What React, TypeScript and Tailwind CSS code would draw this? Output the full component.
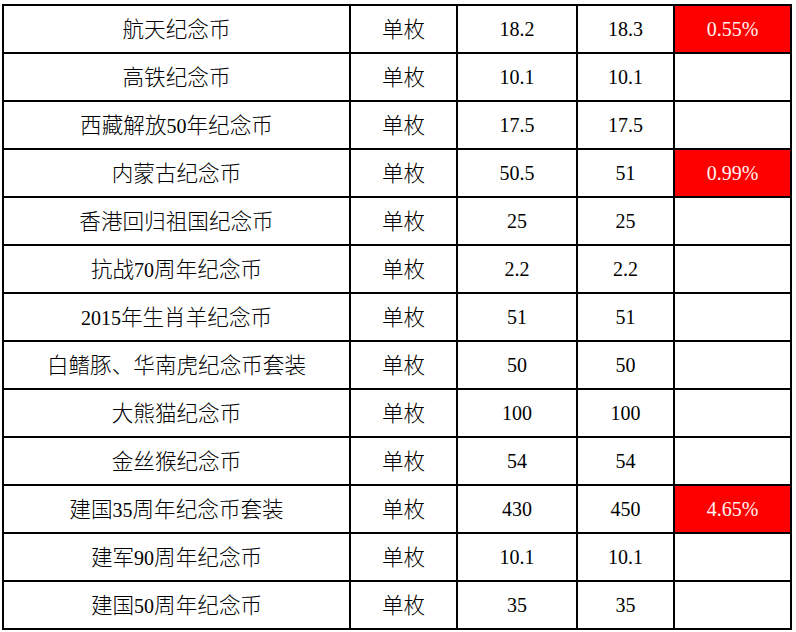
import React from "react";

const rows: [string, string, string, string, string][] = [
  ["航天纪念币", "单枚", "18.2", "18.3", "0.55%"],
  ["高铁纪念币", "单枚", "10.1", "10.1", ""],
  ["西藏解放50年纪念币", "单枚", "17.5", "17.5", ""],
  ["内蒙古纪念币", "单枚", "50.5", "51", "0.99%"],
  ["香港回归祖国纪念币", "单枚", "25", "25", ""],
  ["抗战70周年纪念币", "单枚", "2.2", "2.2", ""],
  ["2015年生肖羊纪念币", "单枚", "51", "51", ""],
  ["白鳍豚、华南虎纪念币套装", "单枚", "50", "50", ""],
  ["大熊猫纪念币", "单枚", "100", "100", ""],
  ["金丝猴纪念币", "单枚", "54", "54", ""],
  ["建国35周年纪念币套装", "单枚", "430", "450", "4.65%"],
  ["建军90周年纪念币", "单枚", "10.1", "10.1", ""],
  ["建国50周年纪念币", "单枚", "35", "35", ""],
];

function Mixed({ text }: { text: string }) {
  const parts = text.match(/[\u3000-\u9fff]+|[^\u3000-\u9fff]+/g) || [];
  return (
    <span className="relative top-[2px]">
      {parts.map((p, i) =>
        /[\u3000-\u9fff]/.test(p) ? (
          <span key={i} className="text-[21.6px] font-light">
            {p}
          </span>
        ) : (
          <span key={i}>{p}</span>
        )
      )}
    </span>
  );
}

export default function App() {
  return (
    <div className="w-[796px] h-[632px] bg-white pt-[4px] pl-[2px]">
      <div
        className="grid grid-cols-[347px_107px_120px_97px_117px] w-fit border-l-2 border-t-2 border-black text-[20px] text-black"
        style={{ fontFamily: '"Liberation Serif", "Noto Sans CJK SC", serif' }}
      >
        {rows.map((r, i) => (
          <React.Fragment key={i}>
            {r.map((c, j) => (
              <div
                key={j}
                className={
                  "h-[48px] border-r-2 border-b-2 border-black flex items-center justify-center leading-none " +
                  (j === 4 && c ? "bg-[#ff0000] text-[#fff4f4]" : "")
                }
              >
                {j < 2 ? <Mixed text={c} /> : <span>{c}</span>}
              </div>
            ))}
          </React.Fragment>
        ))}
      </div>
    </div>
  );
}
